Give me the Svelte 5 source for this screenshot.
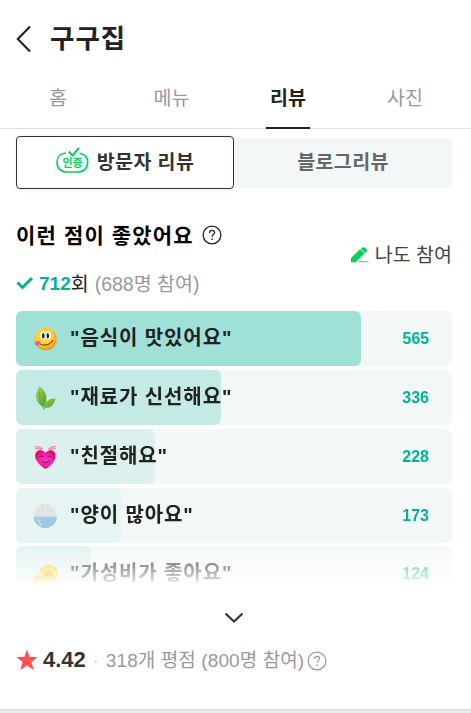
<script>
  const tabs = ["홈", "메뉴", "리뷰", "사진"];
  let active = "리뷰";

  const total = 436;
  const votes = [
    { icon: "face", label: "음식이 맛있어요", count: 565, bar: 345, color: "#a0e1d7" },
    { icon: "leaf", label: "재료가 신선해요", count: 336, bar: 205, color: "#c4eae5" },
    { icon: "heart", label: "친절해요", count: 228, bar: 139, color: "#dcf0ee" },
    { icon: "rice", label: "양이 많아요", count: 173, bar: 105, color: "#e7f4f3" },
    { icon: "coin", label: "가성비가 좋아요", count: 124, bar: 75, color: "#e0f1f0" },
  ];
</script>

<div class="page">
  <header class="header">
    <svg class="back" width="16" height="28" viewBox="0 0 16 28">
      <path d="M14 1.5 1.8 14 14 26.5" fill="none" stroke="#222" stroke-width="2.1" />
    </svg>
    <h1>구구집</h1>
  </header>

  <nav class="tabs">
    {#each tabs as tab}
      <button class="tab" class:active={tab === active} on:click={() => (active = tab)}>
        <span>{tab}</span>
      </button>
    {/each}
  </nav>

  <div class="switch">
    <button class="switch-item selected">
      <svg width="34" height="28" viewBox="0 0 34 28">
        <path
          d="M10 6C4.500 6.500 1 10 1 15.200 1 21.200 5 25 11 25H21.500C27.500 25 31.700 21.200 31.700 15.200 31.700 10.500 28.800 7.300 23.500 6.300"
          fill="none" stroke="#03d15e" stroke-width="1.6" />
        <path d="M12.700 4.500 16.500 8.500 23 1" fill="none" stroke="#03d15e" stroke-width="2" />
        <text x="16.5" y="19.6" text-anchor="middle" class="badge-text">인증</text>
      </svg>
      <span>방문자 리뷰</span>
    </button>
    <button class="switch-item">블로그리뷰</button>
  </div>

  <div class="summary">
    <div>
      <h2>
        <span>이런 점이 좋았어요</span>
        <svg width="20" height="20" viewBox="0 0 20 20" fill="none" stroke="#222" stroke-width="1.3">
          <circle cx="10" cy="10" r="8.9" />
          <path d="M7.500 8c0-1.700 1-2.700 2.600-2.700 1.500 0 2.500.9 2.500 2.300 0 2-2.500 2-2.500 4.100M10.100 13.300v1.600" />
        </svg>
      </h2>
      <p class="counts">
        <svg width="18" height="14" viewBox="0 0 18 14">
          <path d="M1.500 6.500 6.500 11.500 16 2" fill="none" stroke="#00b493" stroke-width="3" />
        </svg>
        <b>712</b><span class="times">회</span><span class="people">(688명 참여)</span>
      </p>
    </div>
    <button class="join">
      <svg width="18" height="16" viewBox="0 0 18 16">
        <path d="M0 11 9 2.300 13.300 6.600 4.700 15.200H0ZM9.700 1.700 10.800.8C13.500-1.200 17.500 2.800 15.200 5L13.900 6Z" fill="#03d15e" />
        <path d="M7.500 14.700h10" stroke="#03d15e" stroke-opacity=".8" />
      </svg>
      나도 참여
    </button>
  </div>

  <div class="list">
    <ul>
      {#each votes as vote}
        <li style={`--bar: ${(vote.bar / total) * 100}%; --color: ${vote.color}`}>
          <svg class="emoji" width="26" height="26" viewBox="0 0 26 26">
            {#if vote.icon === "face"}
              <defs>
                <radialGradient id="face" cx=".45" cy=".4" r=".6">
                  <stop offset="0" stop-color="#ffe554" />
                  <stop offset=".65" stop-color="#ffcb32" />
                  <stop offset="1" stop-color="#f18b16" />
                </radialGradient>
              </defs>
              <circle cx="13.5" cy="13" r="11.2" fill="url(#face)" />
              <ellipse cx="10.9" cy="9.6" rx="2.6" ry="4" fill="#fff" />
              <ellipse cx="16.2" cy="9.6" rx="2.6" ry="4" fill="#fff" />
              <ellipse cx="11.3" cy="9.7" rx="1.3" ry="2.7" fill="#222" />
              <ellipse cx="15.8" cy="9.7" rx="1.3" ry="2.7" fill="#222" />
              <path d="M5.500 15.500c3.500 4.800 11.500 5.200 15.500-1.500" fill="none" stroke="#58350d" stroke-width="1.1" />
              <path d="M5.300 14.800c2-.5 3.500 1.200 2.500 3.200-.8 1.900-3.600 2.400-4.800.6-.5-1.600.5-3.300 2.300-3.800Z" fill="#f35b91" />
            {:else if vote.icon === "leaf"}
              <defs>
                <linearGradient id="leaf" x2="1" y2="1">
                  <stop offset="0" stop-color="#a5d84d" />
                  <stop offset="1" stop-color="#4a9b32" />
                </linearGradient>
              </defs>
              <path d="M7.500 1.500c6 4 9.500 11 4.500 20.500C3 18.500 2 9.500 7.500 1.500Z" fill="url(#leaf)" />
              <path d="M23.500 13.500c-1.500 7-6 10.700-11.500 8.900 1-6.500 5-9.400 11.500-8.900Z" fill="url(#leaf)" />
              <path d="M7.500 6c0 7 1 12.500 4.500 18.500 0-3.500 3-6.500 7-8" fill="none" stroke="#5caa3c" stroke-width=".8" />
            {:else if vote.icon === "heart"}
              <defs>
                <radialGradient id="heart">
                  <stop offset="0" stop-color="#fb37c9" />
                  <stop offset=".65" stop-color="#fa1eaa" />
                  <stop offset="1" stop-color="#df0b57" />
                </radialGradient>
              </defs>
              <path d="M13.500 25C8 22 3.200 16.500 3.200 12 3.200 5.800 9.500 4.500 13.500 8.800 17.500 4.500 23.500 5.800 23.500 12c0 4.500-4.500 10-10 13Z" fill="url(#heart)" />
              <path d="M3 2.500c4 0 6 1 7.500 3M3 5.200c3-1 5-.5 6.500.5M24 2.500c-4 0-6 1-7.500 3M24 5.200c-3-1-5-.5-6.500.5" fill="none" stroke="#ef8faf" stroke-width="1.3" />
              <path d="M7.500 13q2-2.400 4 0M15.500 13q2-2.400 4 0M10 16.500q3.500 4.500 7 0" fill="none" stroke="#721052" stroke-width="1" />
            {:else if vote.icon === "rice"}
              <path d="M2.500 13.500C2.500 6 7 .5 13.300 .5S24 6 24 13.500Z" fill="#e3e3e3" />
              <path d="M6 9h1m3-4h1m4-1h1m3 4h1M10 9h1m4-1h1m3 3h1M5 12h1m6 0h1m-1-6h1m4 4h1" stroke="#d9d9d9" />
              <path d="M8 7h1m4-4h1m4 2h1M8 11h1m4-2h1m3 3h1m2-3h1" stroke="#ededed" stroke-width="1.3" />
              <path d="M1.700 13.500h23.200c0 5.500-3.500 9.500-7.500 10.500v1h-8v-1c-4-1-7.700-5-7.700-10.500Z" fill="#9dc9e2" />
              <path d="M2 13.800h22.500" stroke="#c6e1ee" />
              <path d="M6 16c.5 3 2 5 4 6" fill="none" stroke="#b8dbeb" stroke-width="2" />
            {:else}
              <path d="M1 16.500c1-3 11-3 12 0V26H1Z" fill="#f7a044" />
              <path d="M1 17c2 2 10 2 12 0M1 20.500h12" fill="none" stroke="#ffd05b" stroke-width="1.5" />
              <circle cx="16.5" cy="13" r="9.3" fill="#ffc400" />
              <circle cx="16.5" cy="13" r="7.3" fill="#ffda35" />
              <path d="M12.500 10l2 6 2-5.500 2 5.500 2-6" fill="none" stroke="#da9100" stroke-width="1.6" />
            {/if}
          </svg>
          <span class="label">"{vote.label}"</span>
          <span class="count">{vote.count}</span>
        </li>
      {/each}
    </ul>
  </div>

  <button class="more" aria-label="더보기">
    <svg width="20" height="12" viewBox="0 0 20 12">
      <path d="M1.500 1.500 10 9.500 18.500 1.500" fill="none" stroke="#333" stroke-width="2.2" />
    </svg>
  </button>

  <div class="rating">
    <svg width="22" height="22" viewBox="0 0 22 22">
      <path d="M11 .5 13.700 8H21.700L15.400 13 17.700 21 11 16.400 4.300 21 6.600 13 .3 8H8.300Z" fill="#ff4f4f" />
    </svg>
    <b>4.42</b>
    <i></i>
    <span>318개 평점 (800명 참여)</span>
    <svg class="help" width="20" height="20" viewBox="0 0 20 20" fill="none" stroke="#999" stroke-width="1.2">
      <circle cx="10" cy="10" r="8.9" />
      <path d="M7.500 8c0-1.700 1-2.700 2.600-2.700 1.500 0 2.500.9 2.500 2.300 0 2-2.500 2-2.500 4.100M10.100 13.300v1.600" />
    </svg>
  </div>
  <div class="divider"></div>
</div>

<style>
  :global(body) {
    background: #fff;
  }

  .page {
    box-sizing: border-box;
    height: 713px;
    overflow: hidden;
    color: #222;
    font-family: "Liberation Sans", "Noto Sans CJK KR", sans-serif;
  }

  button {
    border: 0;
    padding: 0;
    background: none;
    color: inherit;
    font: inherit;
    letter-spacing: inherit;
  }

  h1,
  h2,
  p,
  ul {
    margin: 0;
    padding: 0;
  }

  svg {
    flex: none;
    display: block;
  }

  .header {
    display: flex;
    align-items: center;
    height: 78px;
    padding-left: 16px;
  }

  h1 {
    margin-left: 18px;
    font-size: 26.5px;
    line-height: 40px;
    letter-spacing: 1px;
  }

  /* Tabs */
  .tabs {
    display: grid;
    grid-template-columns: 116px 111px 122px 112px;
    height: 50px;
    border-bottom: 1px solid #dfe2e5;
    color: #999;
    font-size: 19.5px;
  }

  .tab {
    display: flex;
    justify-content: center;
    line-height: 41px;
  }

  .tab span {
    box-sizing: border-box;
    min-width: 44px;
    height: 51px;
    text-align: center;
  }

  .active span {
    border-bottom: 2px solid #222;
    color: #222;
    font-weight: 700;
  }

  /* Review type */
  .switch {
    display: flex;
    align-items: center;
    height: 53px;
    margin: 7px 19px 0 16px;
  }

  .switch-item {
    box-sizing: border-box;
    display: flex;
    justify-content: center;
    align-items: center;
    flex: 0 0 50%;
    height: 50px;
    padding-bottom: 4px;
    border-radius: 0 4px 4px 0;
    background: #f3f7f8;
    color: #666;
    font-size: 19.5px;
    font-weight: 700;
    letter-spacing: 0.4px;
  }

  .selected {
    gap: 7px;
    height: 53px;
    border: 1px solid #333;
    border-radius: 4px;
    background: #fff;
    box-shadow: 0 1px 4px rgba(0, 0, 0, 0.08);
    color: #333;
  }

  .badge-text {
    fill: #03d15e;
    font-size: 11px;
    letter-spacing: 0;
  }

  /* Summary */
  .summary {
    display: flex;
    justify-content: space-between;
    margin: 29px 19px 0 16px;
    height: 93px;
  }

  h2 {
    display: flex;
    align-items: center;
    gap: 8px;
    height: 34px;
    color: #000;
    font-size: 21px;
    letter-spacing: 1.15px;
  }

  h2 span {
    margin-bottom: 3px;
  }

  .counts {
    display: flex;
    align-items: center;
    height: 28px;
    margin-top: 16px;
    font-size: 19.5px;
  }

  .counts svg {
    margin-top: 2px;
  }

  .counts b {
    margin: 3px 0 0 5px;
    color: #00b493;
    font-size: 19px;
  }

  .people {
    margin-left: 6px;
    color: #999;
  }

  .join {
    display: flex;
    align-items: center;
    gap: 6px;
    height: 30px;
    margin-top: 20px;
    color: #424242;
    font-size: 19.5px;
  }

  .join svg {
    margin-top: 4px;
  }

  /* Votes */
  .list {
    height: 272px;
    margin: 0 19px 0 16px;
    overflow: hidden;
    -webkit-mask-image: linear-gradient(#000 228px, transparent 278px);
    mask-image: linear-gradient(#000 228px, transparent 278px);
  }

  ul {
    display: grid;
    gap: 4px;
    list-style: none;
  }

  li {
    box-sizing: border-box;
    display: flex;
    align-items: center;
    height: 55px;
    padding: 0 23px 0 16px;
    border-radius: 6px;
    background: #f3f7f8;
    position: relative;
    isolation: isolate;
  }

  li:last-child {
    margin-top: -1px;
  }

  li::before {
    content: "";
    position: absolute;
    z-index: -1;
    inset: 0 auto 0 0;
    width: var(--bar);
    border-radius: 6px;
    background: var(--color);
  }

  .label {
    margin: 0 0 4px 12px;
    font-size: 20px;
    font-weight: 700;
    letter-spacing: 0.9px;
  }

  .count {
    margin-left: auto;
    color: #00b493;
    font-size: 16px;
    font-weight: 700;
  }

  .more {
    display: flex;
    justify-content: center;
    align-items: center;
    width: 467px;
    height: 70px;
  }

  /* Rating */
  .rating {
    display: flex;
    align-items: center;
    height: 28px;
    margin: -7px 0 0 16px;
    color: #999;
    font-size: 19px;
  }

  .rating b {
    margin-left: 5px;
    color: #333;
    font-size: 22px;
  }

  .rating span {
    margin-bottom: 4px;
    letter-spacing: 0.1px;
  }

  .rating i {
    width: 3px;
    height: 3px;
    margin: 2px 9px 0 8px;
    border-radius: 50%;
    background: #ddd;
  }

  .help {
    margin: 2px 0 0 3px;
  }

  .divider {
    height: 10px;
    margin-top: 35px;
    border-top: 1px solid #dcdfe2;
    background: #e7eaed;
  }
</style>
